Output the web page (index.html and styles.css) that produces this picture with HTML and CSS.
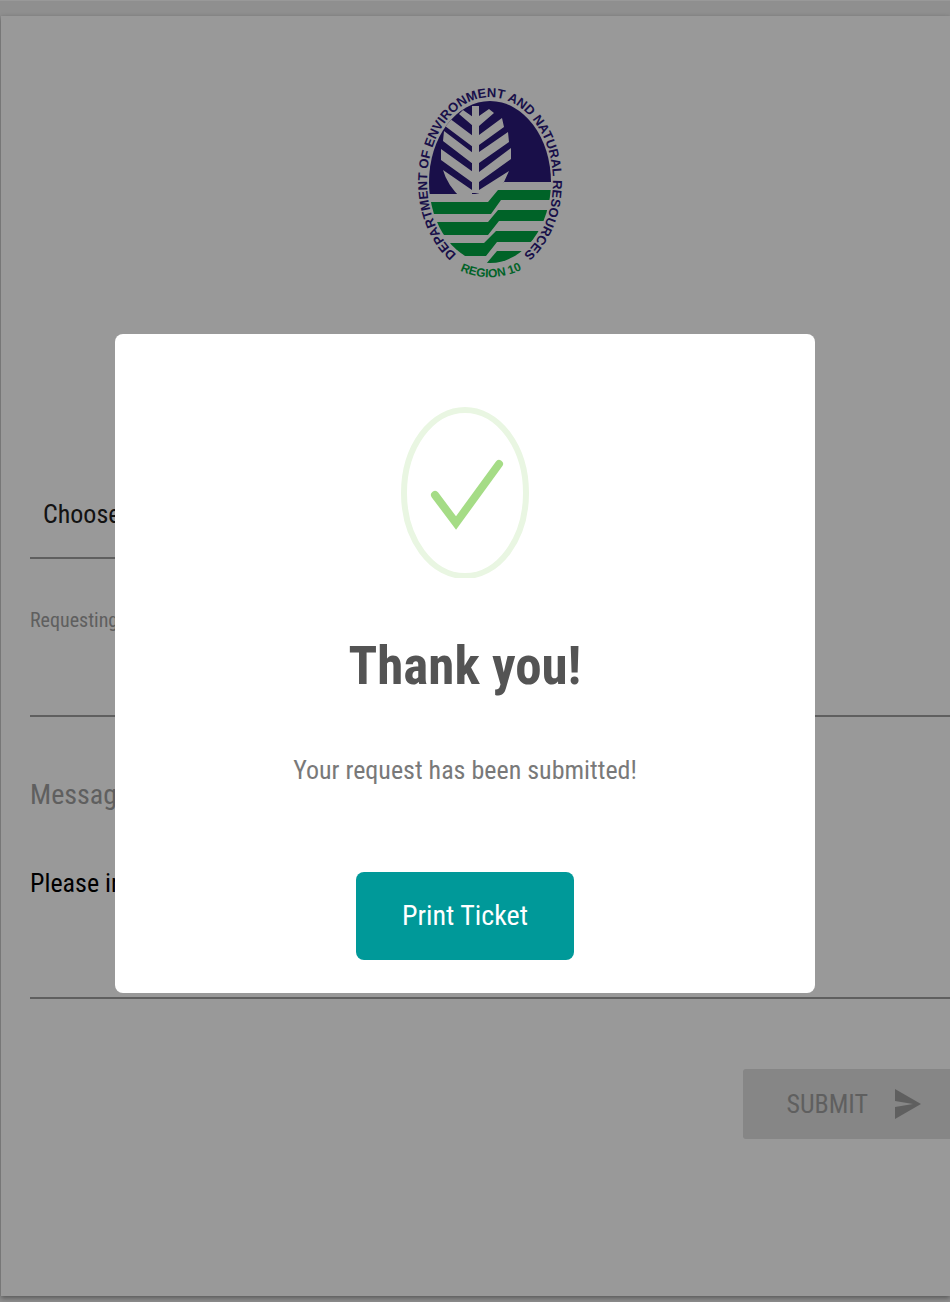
FILE: index.html
```html
<!DOCTYPE html>
<html lang="en">
<head>
<meta charset="utf-8">
<meta name="viewport" content="width=device-width, initial-scale=1">
<title>Support request</title>
<link rel="stylesheet" href="styles.css">
</head>
<body>
<main class="card">
  <svg class="logo" viewBox="0 0 180 215" role="img" aria-label="Department of Environment and Natural Resources, Region 10">
    <defs>
      <clipPath id="seal"><ellipse cx="90" cy="107" rx="61" ry="81"/></clipPath>
      <path id="ring" d="M60 182 A63 85 0 1 1 120 182"/>
      <path id="region" d="M61 196 Q90 209 121 195"/>
    </defs>
    <g clip-path="url(#seal)">
      <path class="navy" d="M20 20H160V107H104L94 115L75 119H20Z"/>
      <g class="pale">
        <path d="M72 31H79V118H72Z"/>
        <path d="M73 42L63 35L59 39L73 51ZM79 41L89 34L94 38L79 51Z"/>
        <path d="M73 61L49 43L45 51L73 72ZM79 60L102 43L104 52L79 70Z"/>
        <path d="M73 78L44 56L43 66L73 89ZM79 77L108 57L109 67L79 88Z"/>
        <path d="M73 97L41 74V85L73 108ZM79 97L111 73V84L79 107Z"/>
        <path d="M43 95L72 115V124H62Q47 110 43 95ZM109 96L79 115V124H92L104 107Z"/>
      </g>
      <g class="green">
        <path d="M20 127H88L98 115H160V125H101L91 139H20Z"/>
        <path d="M20 147H88L98 135H160V146H99L88 160H20Z"/>
        <path d="M20 168H84L96 156H160V167H97L86 181H20Z"/>
        <path d="M86 189L97 176H160V200H86Z"/>
      </g>
    </g>
    <text class="seal-text navy"><textPath href="#ring" startOffset="50%" text-anchor="middle">DEPARTMENT OF ENVIRONMENT AND NATURAL RESOURCES</textPath></text>
    <text class="region-text green"><textPath href="#region" startOffset="50%" text-anchor="middle">REGION 10</textPath></text>
  </svg>
  <form class="form">
    <select class="field choice" aria-label="Choose"><option>Choose</option></select>
    <div class="group">
      <label class="small-label" for="office">Requesting</label>
      <input class="field office" id="office" type="text">
    </div>
    <div class="group message-group">
      <label class="label" for="message">Message</label>
      <textarea class="field message" id="message">Please in</textarea>
    </div>
    <button class="submit" type="submit" disabled>SUBMIT
      <svg class="send" viewBox="0 0 27 30" aria-hidden="true"><path d="M1 0L27 15L1 30V18L19 15L1 12Z"/></svg>
    </button>
  </form>
</main>
<div class="overlay">
  <section class="modal" role="dialog" aria-modal="true" aria-labelledby="modal-title">
    <svg class="success" viewBox="0 0 130 172" aria-hidden="true">
      <ellipse class="success-ring" cx="65" cy="87" rx="61" ry="83"/>
      <path class="tick" d="M35 89L56 117L99 58"/>
    </svg>
    <h2 class="title" id="modal-title">Thank you!</h2>
    <p class="copy">Your request has been submitted!</p>
    <button class="print" type="button">Print Ticket</button>
  </section>
</div>
</body>
</html>
```
FILE: styles.css
```css
* { box-sizing: border-box; }
body {
  margin: 0;
  padding: 15px 0 6px 1px;
  background: #eeeeee;
  border-top: 1px solid #ffffff;
  font-family: "Roboto Condensed", Roboto, sans-serif;
}
.card {
  display: flex;
  flex-direction: column;
  padding: 59px 0 157px 29px;
  background: #ffffff;
  box-shadow: 0 2px 5px rgba(0, 0, 0, .4);
}
.logo { width: 180px; height: 215px; align-self: center; }
.navy { fill: #2b197b; }
.green { fill: #00a643; }
.pale { fill: #ffffff; }
.seal-text { font: bold 13px "Liberation Sans", sans-serif; }
.region-text { font: bold 12px "Liberation Sans", sans-serif; }
.form { display: flex; flex-direction: column; padding-top: 180px; }
.field {
  display: block;
  width: 100%;
  margin: 0;
  padding: 0;
  border: 0;
  border-bottom: 2px solid #9e9e9e;
  border-radius: 0;
  outline: 0;
  background: transparent;
  color: #000000;
  font: 26px/40px "Roboto Condensed", Roboto, sans-serif;
}
.choice { width: 66%; height: 89px; padding-left: 13px; appearance: none; color: #212121; }
.group { display: flex; flex-direction: column; padding-top: 45px; }
.small-label { color: #9e9e9e; font-size: 20px; line-height: 32px; }
.office { height: 81px; }
.message-group { padding-top: 58px; }
.label { color: #9e9e9e; font-size: 28px; line-height: 40px; }
.message { height: 151px; margin-top: 33px; padding-top: 15px; resize: none; overflow: hidden; }
.submit {
  display: flex;
  align-items: center;
  align-self: flex-end;
  gap: 26px;
  height: 70px;
  margin-top: 70px;
  padding: 0 29px 0 43px;
  border: 0;
  border-radius: 3px 0 0 3px;
  background: #dfdfdf;
  color: #9f9f9f;
  font: 26px/40px "Roboto Condensed", Roboto, sans-serif;
}
.send { width: 27px; height: 30px; fill: #9f9f9f; }
.overlay {
  position: fixed;
  inset: 0;
  display: grid;
  place-items: center;
  padding: 25px 20px 0 0;
  background: rgba(0, 0, 0, .4);
}
.modal {
  display: flex;
  flex-direction: column;
  align-items: center;
  width: 700px;
  max-width: 100%;
  padding: 72px 32px 33px;
  border-radius: 8px;
  background: #ffffff;
}
.success { width: 130px; height: 172px; fill: none; }
.success-ring { stroke: #e9f6e2; stroke-width: 6px; }
.tick { stroke: #a5dc86; stroke-width: 8px; stroke-linecap: round; }
.title { margin: 52px 0 0; color: #545454; font-size: 53px; line-height: 72px; }
.copy { margin: 48px 0 0; color: #797979; font-size: 26px; line-height: 40px; }
.print {
  height: 88px;
  margin-top: 82px;
  padding: 0 46px;
  border: 0;
  border-radius: 8px;
  background: #009999;
  color: #ffffff;
  font: 28px/40px "Roboto Condensed", Roboto, sans-serif;
}
```
